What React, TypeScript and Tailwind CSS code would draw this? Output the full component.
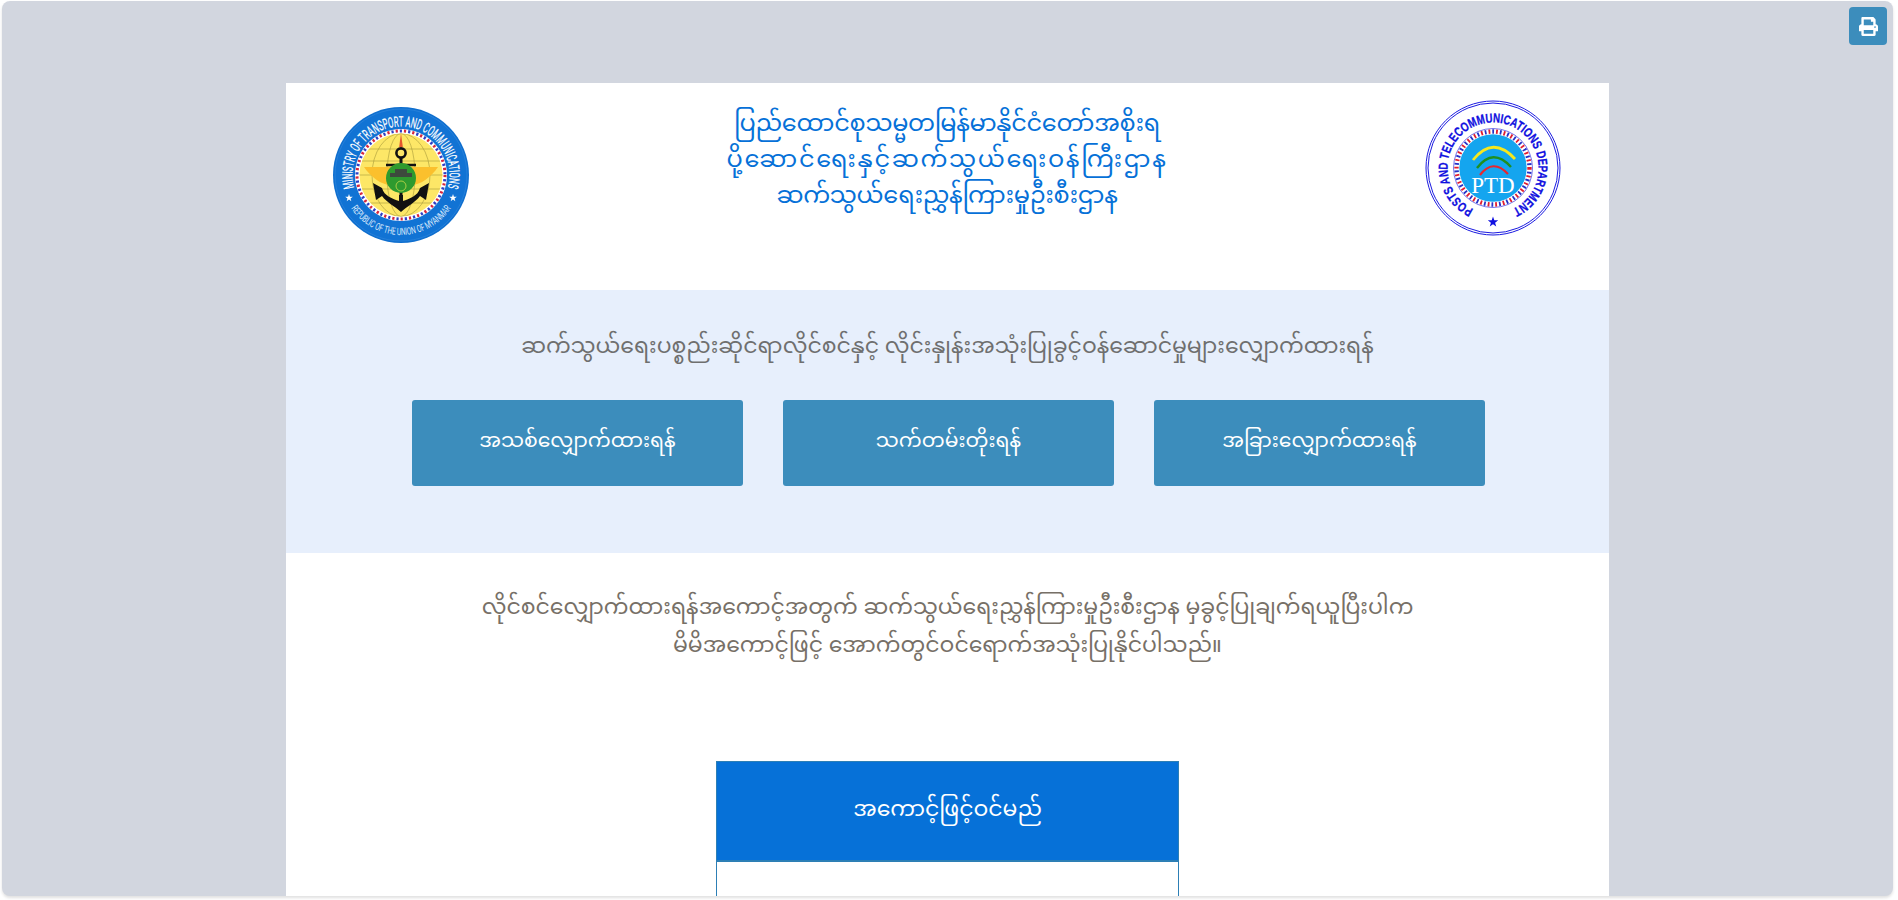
import { FaPrint } from 'react-icons/fa';

const myanmarFont = "font-['Noto_Sans_Myanmar','Padauk','Myanmar_Text','Noto_Sans',sans-serif]";

const buttons = ['အသစ်လျှောက်ထားရန်', 'သက်တမ်းတိုးရန်', 'အခြားလျှောက်ထားရန်'];

function Star({ cx, cy, r, fill }: { cx: number; cy: number; r: number; fill: string }) {
  const points = Array.from({ length: 10 }, (_, i) => {
    const angle = (Math.PI / 5) * i - Math.PI / 2;
    const radius = i % 2 === 0 ? r : r * 0.4;
    return `${cx + radius * Math.cos(angle)},${cy + radius * Math.sin(angle)}`;
  }).join(' ');
  return <polygon points={points} fill={fill} />;
}

function MinistryLogo() {
  return (
    <svg width="136" height="136" viewBox="0 0 136 136">
      <defs>
        <path id="ministry-top" d="M 68 116.5 A 48.5 48.5 0 1 1 68 19.5 A 48.5 48.5 0 1 1 68 116.5" />
        <path id="ministry-bottom" d="M 8 68 A 60 60 0 0 0 128 68" />
        <clipPath id="globe-clip">
          <circle cx="68" cy="68" r="41.5" />
        </clipPath>
      </defs>
      <circle cx="68" cy="68" r="68" fill="#0f6fcf" />
      <circle cx="68" cy="68" r="66" fill="#1173d4" stroke="#3b8fe0" strokeWidth="0.5" />
      <text fill="#fff" stroke="#fff" strokeWidth="0.2" fontFamily="'Liberation Sans Narrow','Roboto',sans-serif" fontSize="14.5">
        <textPath href="#ministry-top" startOffset="50%" textAnchor="middle" textLength="178" lengthAdjust="spacingAndGlyphs">
          MINISTRY OF TRANSPORT AND COMMUNICATIONS
        </textPath>
      </text>
      <text fill="#dbe9fb" fontFamily="'Liberation Sans Narrow','Roboto',sans-serif" fontSize="10">
        <textPath href="#ministry-bottom" startOffset="50%" textAnchor="middle" textLength="118" lengthAdjust="spacingAndGlyphs">
          REPUBLIC OF THE UNION OF MYANMAR
        </textPath>
      </text>
      <Star cx={16} cy={91} r={4} fill="#fff" />
      <Star cx={120} cy={91} r={4} fill="#fff" />
      <circle cx="68" cy="68" r="46" fill="#fff" />
      <circle cx="68" cy="68" r="44" fill="none" stroke="#d7263d" strokeWidth="3" strokeDasharray="2.2 6.2" />
      <circle cx="68" cy="68" r="44" fill="none" stroke="#2e3fc4" strokeWidth="3" strokeDasharray="2.2 6.2" strokeDashoffset="4.2" />
      <circle cx="68" cy="68" r="41.5" fill="#fde767" />
      <g clipPath="url(#globe-clip)" fill="none" stroke="#a89a3a" strokeWidth="0.6">
        <ellipse cx="68" cy="68" rx="14" ry="41.5" />
        <ellipse cx="68" cy="68" rx="29" ry="41.5" />
        <path d="M26 54 H110 M26 68 H110 M26 82 H110 M32 42 H104 M32 96 H104" />
      </g>
      <g fill="#fbc02d">
        <path d="M31 60 H58 V78 C48 78 38 70 31 60 Z" />
        <path d="M105 60 H78 V78 C88 78 98 70 105 60 Z" />
      </g>
      <path d="M68 26 L66.2 40 H69.8 Z" fill="#e4572e" />
      <g stroke="#111" fill="none">
        <circle cx="68" cy="46" r="4.6" strokeWidth="2.6" />
        <path d="M53 58 H83" strokeWidth="2.4" />
        <path d="M68 50 V99" strokeWidth="3" />
      </g>
      <circle cx="68" cy="71" r="15" fill="#2e9a2e" />
      <path d="M57 66 H79 V70 H57 Z M62 62 H74 V66 H62 Z" fill="#3d4a3d" />
      <circle cx="68" cy="79" r="5" fill="none" stroke="#c8d84a" strokeWidth="0.8" />
      <path d="M40 76 L49 81 C51 89 60 92 66 94 V88 H70 V94 C76 92 85 89 87 81 L96 76 L93 93 L87 89 C82 96 74 99 68 105 C62 99 54 96 49 89 L43 93 Z" fill="#111" />
    </svg>
  );
}

function PtdLogo() {
  return (
    <svg width="136" height="136" viewBox="0 0 136 136">
      <defs>
        <path id="ptd-ring" d="M 68 113.5 A 45.5 45.5 0 1 1 68 22.5 A 45.5 45.5 0 1 1 68 113.5" />
      </defs>
      <circle cx="68" cy="68" r="67" fill="#fff" stroke="#1a1ae0" strokeWidth="1" />
      <circle cx="68" cy="68" r="65" fill="none" stroke="#1a1ae0" strokeWidth="1" />
      <text fill="#1010e0" stroke="#1010e0" strokeWidth="0.3" fontFamily="'Liberation Sans',sans-serif" fontSize="13" fontWeight="700">
        <textPath href="#ptd-ring" startOffset="50%" textAnchor="middle" textLength="245" lengthAdjust="spacingAndGlyphs">
          POSTS AND TELECOMMUNICATIONS DEPARTMENT
        </textPath>
      </text>
      <Star cx={68} cy={122} r={5.5} fill="#1010e0" />
      <circle cx="68" cy="68" r="39.5" fill="#fff" stroke="#3a3ae0" strokeWidth="0.7" />
      <circle cx="68" cy="68" r="36.5" fill="none" stroke="#e11d2e" strokeWidth="4.4" strokeDasharray="1.8 5.8" />
      <circle cx="68" cy="68" r="36.5" fill="none" stroke="#2230c8" strokeWidth="4.4" strokeDasharray="1.8 5.8" strokeDashoffset="3.8" />
      <circle cx="68" cy="68" r="33.7" fill="#14a5ef" />
      <path d="M48 60 Q68 35 90 59" fill="none" stroke="#f6e81e" strokeWidth="2.8" />
      <path d="M52 68 Q68 47 86 67" fill="none" stroke="#1f8f1f" strokeWidth="2.4" />
      <path d="M55 75 Q68 58 83 74" fill="none" stroke="#e8262e" strokeWidth="2.2" />
      <text x="68" y="93" textAnchor="middle" fill="#fff" fontFamily="'Liberation Serif',serif" fontSize="23">
        PTD
      </text>
    </svg>
  );
}

export default function App() {
  return (
    <div className={`h-screen overflow-hidden bg-white pl-[2px] pr-[5px] pb-[4px] pt-px ${myanmarFont}`}>
      <div className="relative h-full overflow-hidden rounded-lg bg-[#d2d6df] pt-[82px] shadow-[0_2px_3px_rgba(0,0,0,0.12)]">
        <button className="absolute right-[6px] top-[6px] flex h-[38px] w-[38px] items-center justify-center rounded bg-[#3c8dbc] text-white">
          <FaPrint size={19} />
        </button>

        <div className="ml-[284px] w-[1323px] bg-white">
          {/* Letterhead */}
          <div className="flex h-[207px] items-start">
            <div className="ml-[47px] mt-[24px] w-[136px]">
              <MinistryLogo />
            </div>
            <div className="flex-1 pt-[25px] text-center text-[24px] leading-[36px] text-[#0671d8]">
              <p className="tracking-[-0.3px]">ပြည်ထောင်စုသမ္မတမြန်မာနိုင်ငံတော်အစိုးရ</p>
              <p className="tracking-[1.7px]">ပို့ဆောင်ရေးနှင့်ဆက်သွယ်ရေးဝန်ကြီးဌာန</p>
              <p className="tracking-[-0.3px]">ဆက်သွယ်ရေးညွှန်ကြားမှုဦးစီးဌာန</p>
            </div>
            <div className="mr-[48px] mt-[17px] w-[136px]">
              <PtdLogo />
            </div>
          </div>

          {/* Application types */}
          <div className="h-[263px] bg-[#e7effc] pt-[39px]">
            <p className="text-center text-[22px] leading-[38px] text-[#6f6f6f]">
              ဆက်သွယ်ရေးပစ္စည်းဆိုင်ရာလိုင်စင်နှင့် လိုင်းနှုန်းအသုံးပြုခွင့်ဝန်ဆောင်မှုများလျှောက်ထားရန်
            </p>
            <div className="mt-[33px] grid grid-cols-3 gap-[40px] pl-[126px] pr-[124px]">
              {buttons.map(label => (
                <div key={label} className="flex h-[86px] items-center justify-center rounded-[3px] bg-[#3c8dbc] text-[20.4px] text-white">
                  {label}
                </div>
              ))}
            </div>
          </div>

          {/* Login */}
          <div className="pt-[38px]">
            <p className="text-center text-[22px] leading-[37.5px] text-[#777067]">
              လိုင်စင်လျှောက်ထားရန်အကောင့်အတွက် ဆက်သွယ်ရေးညွှန်ကြားမှုဦးစီးဌာန မှခွင့်ပြုချက်ရယူပြီးပါက
              <br />
              မိမိအကောင့်ဖြင့် အောက်တွင်ဝင်ရောက်အသုံးပြုနိုင်ပါသည်။
            </p>
            <div className="mx-auto mt-[95px] w-[463px] border border-[#2d7fb5]">
              <div className="flex h-[100px] items-center justify-center border-b-2 border-[#2d7fb5] bg-[#0671d8] text-[22px] text-white">
                အကောင့်ဖြင့်ဝင်မည်
              </div>
              <div className="h-[200px] bg-white" />
            </div>
          </div>
        </div>
      </div>
    </div>
  );
}
